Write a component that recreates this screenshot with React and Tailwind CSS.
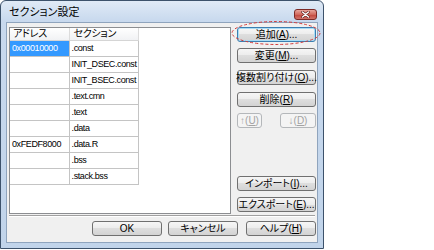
import clsx from 'clsx';

const rows = [
  { addr: '0x00010000', sec: '.const', selected: true },
  { addr: '', sec: 'INIT_DSEC.const' },
  { addr: '', sec: 'INIT_BSEC.const' },
  { addr: '', sec: '.text.cmn' },
  { addr: '', sec: '.text' },
  { addr: '', sec: '.data' },
  { addr: '0xFEDF8000', sec: '.data.R' },
  { addr: '', sec: '.bss' },
  { addr: '', sec: '.stack.bss' },
];

const Btn = ({ children, className, disabled, focus }) => (
  <div
    className={clsx(
      'h-[15px] flex items-center justify-center rounded-[3px] border text-[10px] leading-none whitespace-nowrap',
      disabled
        ? 'border-[#b4b7ba] bg-[#f4f4f4] text-[#a3a3a3]'
        : 'bg-[linear-gradient(#f6f6f6,#ececec_50%,#dedede_50%,#d3d3d3)] text-black',
      !disabled && (focus ? 'border-[#3c7fb1] shadow-[inset_0_0_0_1px_#a9dcf5]' : 'border-[#707070]'),
      className
    )}
  >
    {children}
  </div>
);

const U = ({ children }) => <span className="underline">{children}</span>;

export default function App() {
  return (
    <div className="w-[434px] h-[250px] bg-white font-['Liberation_Sans','Noto_Sans_CJK_JP',sans-serif] [font-feature-settings:'palt']">
      {/* dialog window */}
      <div className="relative w-[324px] h-[249px] flex flex-col rounded-t-[6px] border border-[#3d526b] bg-[linear-gradient(#e0eaf6,#c8d9ee_20px,#c1d4ea)]">
        {/* title bar */}
        <div className="h-[21px] flex justify-between pl-[8px] pr-[6px]">
          <div className="pt-[6px] text-[11px] leading-none text-black">セクション設定</div>
          <div className="mt-[8px] w-[23px] h-[11px] rounded-[3px] border border-[#7c2a26] bg-[linear-gradient(#e8a59c,#d1695d_50%,#c2443a_50%,#d0736a)] flex items-center justify-center">
            <svg width="9" height="7" viewBox="0 0 9 7">
              <path d="M1.5 1 L7.5 6 M7.5 1 L1.5 6" stroke="#5a1a16" strokeWidth="2.6" strokeLinecap="round" />
              <path d="M1.5 1 L7.5 6 M7.5 1 L1.5 6" stroke="#ffffff" strokeWidth="1.5" strokeLinecap="round" />
            </svg>
          </div>
        </div>

        {/* client area */}
        <div className="mx-[5px] mb-[5px] h-[221px] border-l border-t border-r border-b border-[#8fa4bd] bg-[#f0f0f0] flex flex-col pt-[4px] pl-[2px] pr-[1px]">
          <div className="flex gap-[6px] h-[187px]">
            {/* list */}
            <div className="w-[222px] h-[187px] border border-[#8c8e91] bg-white">
              <div className="w-[129px] text-[9px] leading-none text-black">
                <div className="flex h-[13px] border-b border-[#d5d5d5] bg-[linear-gradient(#ffffff,#f1f2f4)]">
                  <div className="w-[60px] border-r border-[#dcdcdc] pl-[3px] flex items-center text-[10px] tracking-[-0.3px]">アドレス</div>
                  <div className="w-[70px] border-r border-[#dcdcdc] pl-[4px] flex items-center text-[10px] tracking-[-0.3px]">セクション</div>
                </div>
                {rows.map((r, i) => (
                  <div key={i} className="flex h-[16px] border-b border-[#c4c4c4]">
                    <div
                      className={clsx(
                        'w-[60px] border-r border-[#c4c4c4] pl-[2px] flex items-center tracking-[-0.4px]',
                        r.selected && 'bg-[#3399ff] text-white'
                      )}
                    >
                      {r.addr}
                    </div>
                    <div className="w-[70px] border-r border-[#c4c4c4] pl-[2px] flex items-center tracking-[-0.4px]">{r.sec}</div>
                  </div>
                ))}
              </div>
            </div>

            {/* right buttons */}
            <div className="w-[79px] flex flex-col">
              <Btn focus>追加(<U>A</U>)...</Btn>
              <Btn className="mt-[6px]">変更(<U>M</U>)...</Btn>
              <Btn className="mt-[7px]">複数割り付け(<U>O</U>)...</Btn>
              <Btn className="mt-[7px]">削除(<U>R</U>)</Btn>
              <div className="mt-[6px] flex justify-between">
                <Btn disabled className="w-[25px]">↑(<U>U</U>)</Btn>
                <Btn disabled className="w-[36px]">↓(<U>D</U>)</Btn>
              </div>
              <Btn className="mt-[48px]">インポート(<U>I</U>)...</Btn>
              <Btn className="mt-[6px]">エクスポート(<U>E</U>)...</Btn>
            </div>
          </div>

          {/* separator */}
          <div className="mt-[1px] mr-[1px] h-[2px] border-t border-[#a0a0a0] border-b border-b-white" />

          {/* bottom buttons */}
          <div className="mt-[4px] flex justify-end">
            <Btn className="w-[70px]">OK</Btn>
            <Btn className="w-[70px] ml-[6px]">キャンセル</Btn>
            <Btn className="w-[70px] ml-[8px]">ヘルプ(<U>H</U>)</Btn>
          </div>
        </div>

        {/* red annotation ellipse */}
        <svg className="absolute left-[230px] top-[19px]" width="90" height="26" viewBox="0 0 90 26">
          <ellipse cx="45" cy="13" rx="44" ry="11.5" fill="none" stroke="#d23a3a" strokeWidth="1" strokeDasharray="3 2" />
        </svg>
      </div>
    </div>
  );
}
